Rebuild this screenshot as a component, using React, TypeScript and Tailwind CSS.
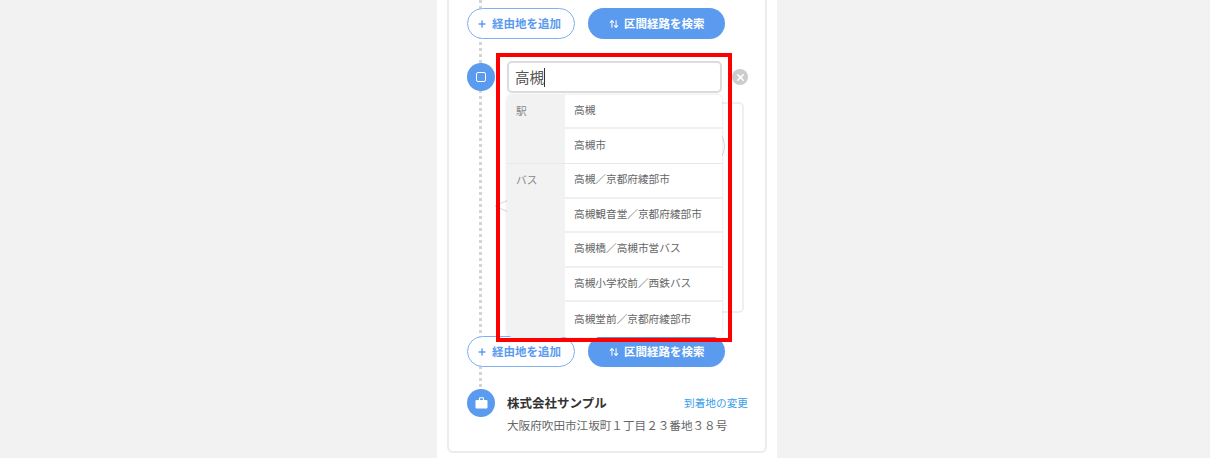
import React from "react";
import { Plus, ArrowUpDown, X } from "lucide-react";

const stationRows = ["高槻", "高槻市"];
const busRows = [
  "高槻／京都府綾部市",
  "高槻観音堂／京都府綾部市",
  "高槻橋／高槻市営バス",
  "高槻小学校前／西鉄バス",
  "高槻堂前／京都府綾部市",
];

const ActionButtons = () => (
  <div className="relative flex gap-[13px]">
    <button className="flex h-[31px] w-[108px] items-center gap-[5px] rounded-full border border-[#7fb1f2] bg-white pl-[9px] text-[11.5px] font-bold text-[#5a9bef]">
      <Plus size={10} strokeWidth={3.5} />
      経由地を追加
    </button>
    <button className="flex h-[31px] w-[137px] items-center gap-[5px] rounded-full bg-[#5a9bef] pl-[21px] text-[11.5px] font-bold text-white">
      <ArrowUpDown size={10} strokeWidth={2.5} />
      区間経路を検索
    </button>
  </div>
);

const SuggestGroup = ({ title, rows, rowClass }: { title: string; rows: string[]; rowClass: string }) => (
  <div className="flex border-b border-[#e8e8e8] last:border-b-0">
    <div className="w-[58px] bg-[#f2f2f2] pl-[9px] pt-[8px] text-[10.67px] text-[#888]">{title}</div>
    <div className="flex-1">
      {rows.map((row, i) => (
        <div
          key={row}
          className={`flex items-center bg-white pb-[2px] pl-[9px] text-[10.67px] text-[#666] ${rowClass} ${
            i === rows.length - 1 ? "" : "border-b-2 border-[#efefef]"
          }`}
        >
          {row}
        </div>
      ))}
    </div>
  </div>
);

export default function App() {
  return (
    <div
      className="flex h-[458px] justify-center overflow-hidden bg-[#f2f2f2]"
      style={{ fontFamily: '"Noto Sans CJK JP", "Noto Sans", sans-serif' }}
    >
      <div className="ml-[4px] h-full w-[340px] bg-white px-[10px]">
        <div className="relative h-[453px] rounded-b-[6px] border-x-2 border-b-2 border-[#ececec] pl-[18px] pr-[17px] pt-[8px]">
          {/* dotted route line */}
          <div className="absolute bottom-[40px] left-[30px] top-0 border-l-[3px] border-dotted border-[#d4d4d4]" />

          <ActionButtons />

          {/* stop being edited */}
          <div className="relative mt-[22px] flex items-center">
            <div className="flex h-[28px] w-[28px] shrink-0 items-center justify-center rounded-full bg-[#5a9bef]">
              <div className="h-[10px] w-[10px] rounded-[2px] border border-white" />
            </div>
            <div className="ml-[12px] flex h-[32px] w-[215px] items-center rounded-[5px] border-2 border-[#dcdcdc] bg-white pl-[6px] text-[14.5px] text-[#555]">
              高槻
              <span className="h-[19px] w-px bg-[#333]" />
            </div>
            <div className="ml-[10px] flex h-[16px] w-[16px] items-center justify-center rounded-full bg-[#cccccc] text-white">
              <X size={11} strokeWidth={3.5} />
            </div>

            {/* suggestions */}
            <div className="absolute left-[40px] top-[34px] z-10 w-[215px] overflow-hidden rounded-[5px] shadow-[0_0_3px_rgba(0,0,0,0.15)]">
              <SuggestGroup title="駅" rows={stationRows} rowClass="h-[34px]" />
              <SuggestGroup title="バス" rows={busRows} rowClass="h-[34.6px]" />
            </div>
          </div>

          {/* detail box under the suggestions */}
          <div className="relative ml-[40px] mt-[9px] h-[211px] w-[237px] rounded-[5px] border-2 border-[#efefef] bg-white">
            <svg className="absolute left-[-15px] top-[96px]" width="13" height="12" viewBox="0 0 13 12" fill="none">
              <path d="M13 0.5 L1 6 L13 11.5" stroke="#d8d8d8" />
            </svg>
            <div className="absolute right-[17px] top-[22px] h-[40px] w-[40px] rounded-full border border-[#d8d8d8]" />
          </div>

          <div className="mt-[23px]">
            <ActionButtons />
          </div>

          {/* destination */}
          <div className="relative mt-[22px] flex">
            <div className="flex h-[28px] w-[28px] shrink-0 items-center justify-center rounded-full bg-[#5a9bef]">
              <svg width="13" height="12" viewBox="0 0 13 12" fill="none">
                <path d="M4.5 3V1.5a.7.7 0 0 1 .7-.7h2.6a.7.7 0 0 1 .7.7V3" stroke="white" strokeWidth="1.1" />
                <rect x="0.5" y="3" width="12" height="8.5" rx="1.2" fill="white" />
              </svg>
            </div>
            <div className="ml-[12px] flex-1">
              <div className="flex items-center justify-between">
                <span className="text-[12.5px] font-bold leading-[28px] text-[#333]">株式会社サンプル</span>
                <a className="text-[10.67px] text-[#3ba0e8]">到着地の変更</a>
              </div>
              <div className="text-[11.6px] leading-[17px] text-[#666]">大阪府吹田市江坂町１丁目２３番地３８号</div>
            </div>
          </div>
        </div>
      </div>

      {/* red annotation frame */}
      <div className="absolute left-[496px] top-[53px] z-20 h-[289px] w-[236px] border-[4px] border-[#ff0000]" />
    </div>
  );
}
